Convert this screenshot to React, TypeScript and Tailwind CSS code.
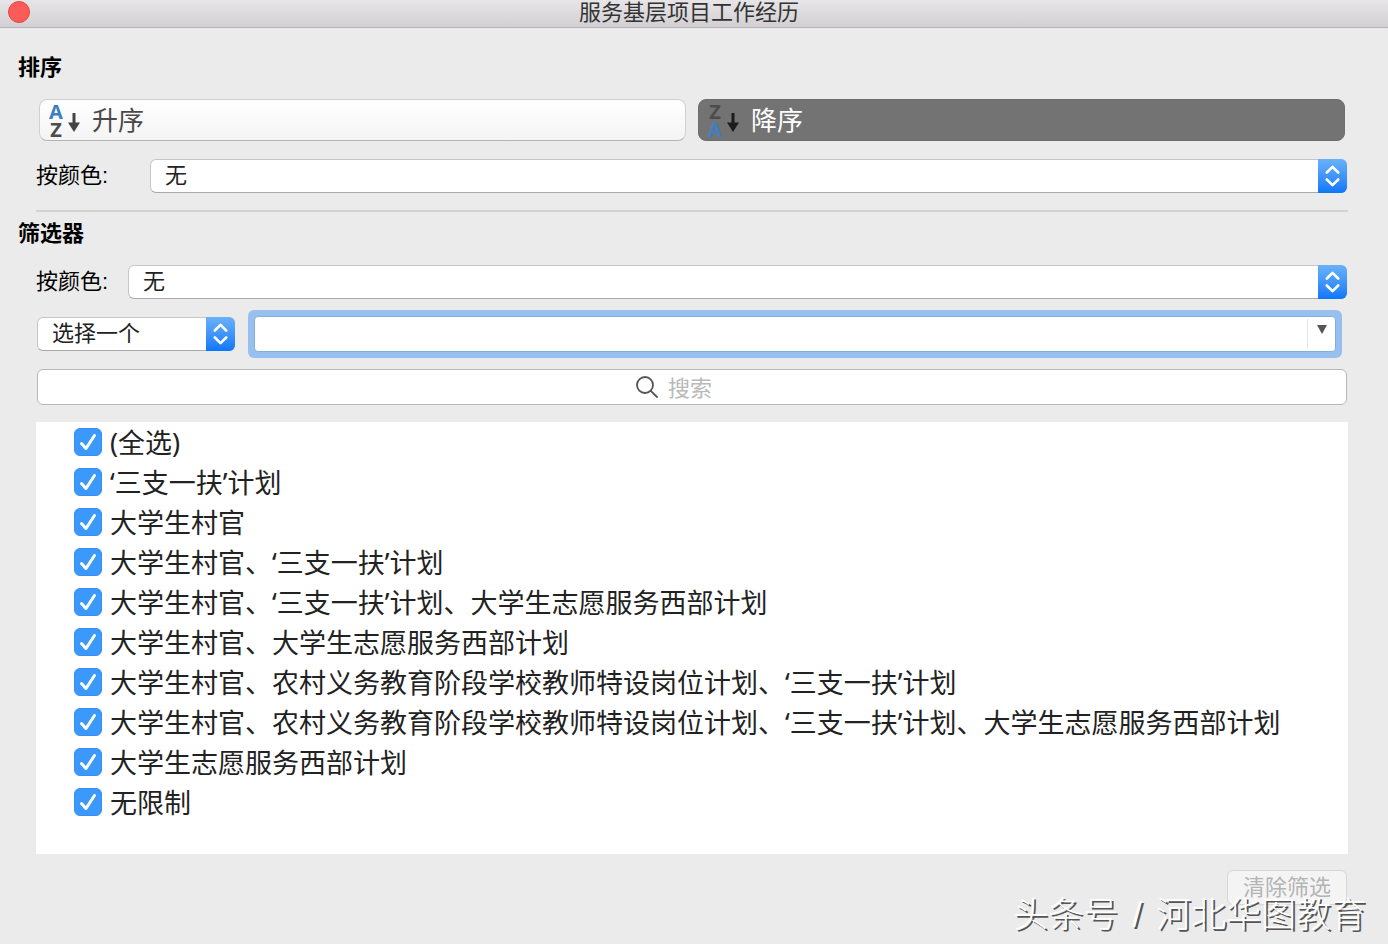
import React, { useState } from 'react';

const FILTER_VALUES = [
  '‘三支一扶’计划',
  '大学生村官',
  '大学生村官、‘三支一扶’计划',
  '大学生村官、‘三支一扶’计划、大学生志愿服务西部计划',
  '大学生村官、大学生志愿服务西部计划',
  '大学生村官、农村义务教育阶段学校教师特设岗位计划、‘三支一扶’计划',
  '大学生村官、农村义务教育阶段学校教师特设岗位计划、‘三支一扶’计划、大学生志愿服务西部计划',
  '大学生志愿服务西部计划',
  '无限制',
];

interface SortIconProps {
  descending?: boolean;
}

const SortIcon: React.FC<SortIconProps> = ({ descending = false }) => (
  <svg width="34" height="36" viewBox="0 0 34 36" className="shrink-0 overflow-visible" aria-hidden="true">
    <g fontFamily="'Noto Sans', sans-serif" fontWeight="700" fontSize="20" textAnchor="middle">
      <text x="8" y={descending ? 35 : 17} fill="#3f7fc1">A</text>
      <text x="8" y={descending ? 17 : 35} fill="#4c4c4c">Z</text>
    </g>
    <path d="M24.500 11h3v9.500H32L26 30l-6-9.500h4.500z" fill={descending ? '#1c1c1c' : '#444444'} />
  </svg>
);

interface PopupSelectProps {
  id: string;
  options: string[];
  label?: string;
  className?: string;
}

const PopupSelect: React.FC<PopupSelectProps> = ({ id, options, label, className = '' }) => (
  <div className={`grid h-[34px] ${className}`}>
    <select
      id={id}
      aria-label={label}
      className="col-start-1 row-start-1 w-full appearance-none rounded-md border border-[#c6c6c6] border-b-[#a9a9a9] bg-white pl-3.5 pr-9 text-[22px] leading-8 text-[#222222] outline-none"
    >
      {options.map((o) => (
        <option key={o}>{o}</option>
      ))}
    </select>
    <span className="pointer-events-none col-start-1 row-start-1 flex w-[29px] items-center justify-center justify-self-end rounded-r-md bg-linear-to-b from-[#69b1fa] to-[#0a77f9]">
      <svg width="15" height="22" viewBox="0 0 15 22" fill="none" stroke="white" strokeWidth="2.600" strokeLinecap="round" strokeLinejoin="round">
        <path d="M1.800 7.500l5.700-5.700 5.700 5.700M1.800 14.500l5.700 5.700 5.700-5.700" />
      </svg>
    </span>
  </div>
);

interface CheckRowProps {
  text: string;
  checked: boolean;
  onChange: () => void;
}

const CheckRow: React.FC<CheckRowProps> = ({ text, checked, onChange }) => (
  <label className="flex min-h-10 items-center gap-2">
    <span className="grid size-7 shrink-0">
      <input
        type="checkbox"
        checked={checked}
        onChange={onChange}
        className="col-start-1 row-start-1 size-7 appearance-none rounded-md border border-[#c0c0c0] bg-white checked:border-[#3590f0] checked:bg-[#3b99fc]"
      />
      {checked && (
        <svg viewBox="0 0 28 28" className="pointer-events-none col-start-1 row-start-1 size-7" fill="none" stroke="white" strokeWidth="3" strokeLinecap="round" strokeLinejoin="round">
          <path d="M7.500 15.500l4.500 5L20.500 7.500" />
        </svg>
      )}
    </span>
    <span className="pt-0.5 font-['Noto_Sans','Noto_Sans_CJK_SC',sans-serif] text-[27px] leading-[38px] text-[#222222]">{text}</span>
  </label>
);

const App: React.FC = () => {
  const [selected, setSelected] = useState<string[]>(FILTER_VALUES);
  const [descending, setDescending] = useState(true);

  const allSelected = selected.length === FILTER_VALUES.length;

  const toggle = (value: string) => {
    setSelected((prev) => (prev.includes(value) ? prev.filter((v) => v !== value) : [...prev, value]));
  };

  const sortButton = "flex h-[42px] items-center gap-2.5 rounded-lg border px-2 font-['Noto_Sans','Noto_Sans_CJK_SC',sans-serif] text-[26px] leading-10";
  const sortIdle = 'border-[#d0d0d0] border-b-[#b5b5b5] bg-linear-to-b from-white to-[#f4f4f4] text-[#4a4a4a]';
  const sortActive = 'border-[#6e6e6e] bg-[#737373] text-white';

  return (
    <div className="relative min-h-screen bg-[#ebebeb] font-['Liberation_Sans','Noto_Sans_CJK_SC',sans-serif] text-black">
      {/* Title bar */}
      <header className="flex h-7 items-start border-b border-[#b4b4b4] bg-linear-to-b from-[#e7e5e7] to-[#d2d0d2] px-2">
        <button aria-label="关闭" className="mt-px size-[22px] rounded-full border border-[#e2463f] bg-[#fc5b57]" />
        <h1 className="flex-1 pr-8 text-center text-[22px] leading-[26px] text-[#333333]">服务基层项目工作经历</h1>
      </header>

      <main className="pb-10 pl-9 pr-10 pt-6">
        {/* Sort */}
        <section>
          <h2 className="-ml-[18px] text-[22px] font-bold leading-8">排序</h2>
          <div className="mt-[15px] grid grid-cols-2 gap-3 px-[3px]">
            <button onClick={() => setDescending(false)} className={`${sortButton} ${descending ? sortIdle : sortActive}`}>
              <SortIcon />
              升序
            </button>
            <button onClick={() => setDescending(true)} className={`${sortButton} ${descending ? sortActive : sortIdle}`}>
              <SortIcon descending />
              降序
            </button>
          </div>
          <div className="mt-[18px] flex items-center pr-px">
            <label htmlFor="sort-color" className="w-[114px] text-[22px] leading-8">按颜色:</label>
            <PopupSelect id="sort-color" options={['无']} className="flex-1" />
          </div>
        </section>

        <hr className="mt-[17px] border-t-2 border-[#d2d2d2]" />

        {/* Filter */}
        <section className="mt-1.5">
          <h2 className="-ml-[18px] text-[22px] font-bold leading-8">筛选器</h2>
          <div className="mt-[15px] flex items-center pr-px">
            <label htmlFor="filter-color" className="w-[92px] text-[22px] leading-8">按颜色:</label>
            <PopupSelect id="filter-color" options={['无']} className="flex-1" />
          </div>

          <div className="mt-[11px] flex items-center gap-[13px] pl-px pr-1.5">
            <PopupSelect id="condition" label="条件" options={['选择一个']} className="w-[198px]" />
            <div className="flex h-12 flex-1 rounded-md bg-[#97c0f0] p-1.5">
              <div className="flex flex-1 rounded-sm border border-[#86aeda] bg-white">
                <input aria-label="条件值" className="min-w-0 flex-1 px-2 text-[22px] outline-none" />
                <button aria-label="显示选项" className="my-0.5 flex w-7 items-start justify-center border-l border-[#e4e4e4] pt-1.5">
                  <svg width="10" height="9" viewBox="0 0 10 9" fill="#555555">
                    <path d="M0 0h10L5 9z" />
                  </svg>
                </button>
              </div>
            </div>
          </div>

          <div className="mt-[11px] pl-px pr-px">
            <label className="flex h-9 items-center justify-center gap-2.5 rounded-md border border-[#b8b8b8] bg-white">
              <svg width="22" height="22" viewBox="0 0 22 22" fill="none" stroke="#555555" strokeWidth="1.800" strokeLinecap="round">
                <circle cx="9" cy="9" r="8" />
                <path d="M14.800 14.800L21 21" />
              </svg>
              <input
                type="text"
                aria-label="搜索"
                placeholder="搜索"
                className="w-20 font-['Noto_Sans','Noto_Sans_CJK_SC',sans-serif] text-[22px] leading-8 outline-none placeholder:text-[#b9b9b9]"
              />
            </label>
          </div>

          <div className="mt-[17px] bg-white pb-8 pl-[38px]">
            <CheckRow
              text="(全选)"
              checked={allSelected}
              onChange={() => setSelected(allSelected ? [] : FILTER_VALUES)}
            />
            {FILTER_VALUES.map((value) => (
              <CheckRow key={value} text={value} checked={selected.includes(value)} onChange={() => toggle(value)} />
            ))}
          </div>

          <div className="mt-4 flex justify-end pr-px">
            <button disabled className="h-[35px] w-[120px] rounded-md border border-[#d6d6d6] bg-[#f4f4f4] text-[22px] leading-8 text-[#b4b4b4]">
              清除筛选
            </button>
          </div>
        </section>
      </main>

      {/* Watermark */}
      <p className="pointer-events-none absolute bottom-2 right-[22px] flex gap-3.5 text-[35px] font-light leading-11 text-white [text-shadow:2px_2px_0_#555]">
        <span>头条号</span>
        <span>/</span>
        <span>河北华图教育</span>
      </p>
    </div>
  );
};

export default App;
